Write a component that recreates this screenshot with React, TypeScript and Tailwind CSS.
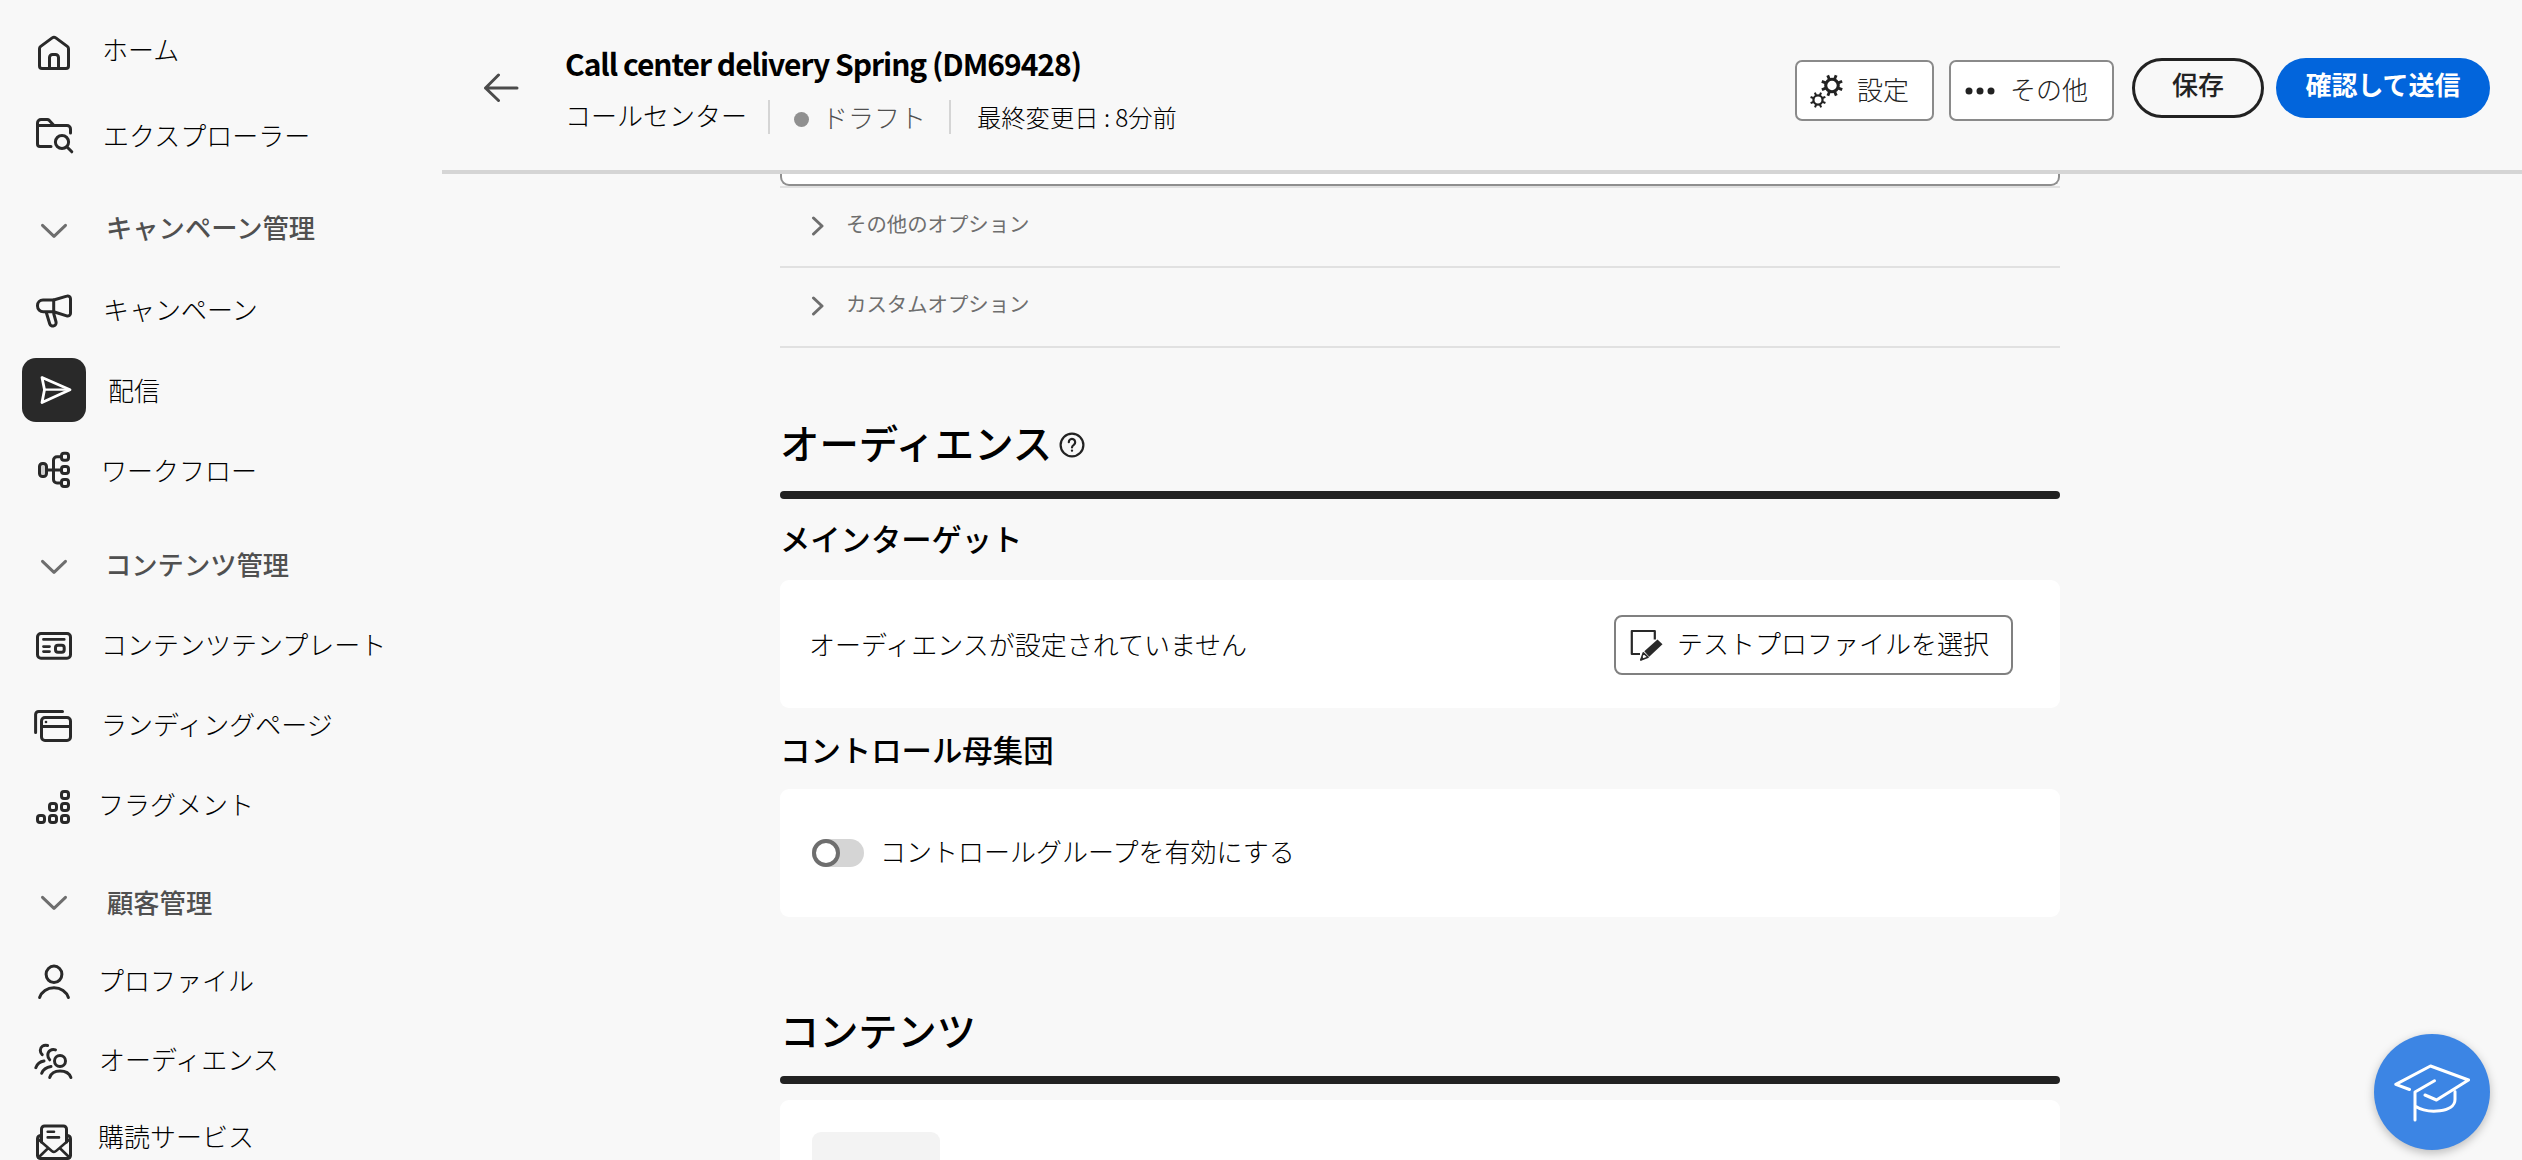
import type { ReactNode } from 'react';

function Glyph({ children, className = 'text-[#292929]' }: { children: ReactNode; className?: string }) {
  return (
    <svg
      viewBox="0 0 40 40"
      className={`size-10 shrink-0 overflow-visible ${className}`}
      fill="none"
      stroke="currentColor"
      strokeWidth="3"
      strokeLinecap="round"
      strokeLinejoin="round"
    >
      {children}
    </svg>
  );
}

const icons: Record<string, ReactNode> = {
  home: (
    <>
      <path d="M5.5 34V16.8a3 3 0 0 1 1.2-2.4L18.2 5.9a3 3 0 0 1 3.6 0l11.5 8.5a3 3 0 0 1 1.2 2.4V34a2.5 2.5 0 0 1-2.5 2.5H8A2.5 2.5 0 0 1 5.5 34Z" />
      <path d="M15.5 36V25.5a3 3 0 0 1 3-3h3a3 3 0 0 1 3 3V36" />
    </>
  ),
  explorer: (
    <>
      <path d="M17 31.5H6A2.5 2.5 0 0 1 3.5 29V8A3.5 3.5 0 0 1 7 4.5h6.2a3 3 0 0 1 2.1.9l4.7 5.1" />
      <path d="M3.5 10.5H33a3.5 3.5 0 0 1 3.5 3.5v4" />
      <circle cx="28" cy="27" r="6.6" />
      <path d="m32.8 31.8 5 5" />
    </>
  ),
  campaign: (
    <>
      <path d="M19.7 9H9a5.5 5.5 0 0 0-5.5 5.5v.5A5.8 5.8 0 0 0 9.3 20.8h10.4Z" />
      <path d="M19.7 9 32.8 5.1A2.8 2.8 0 0 1 36.5 7.8v14.4A2.8 2.8 0 0 1 32.7 24.9L19.7 20.8" />
      <path d="m12.3 21.5 3.4 11.2a3.3 3.3 0 0 0 4.1 2.2 3.3 3.3 0 0 0 2.2-4.1L19.7 22.5" />
    </>
  ),
  delivery: (
    <>
      <path d="M8 7.5 36 19.7 8 32.5l2.5-12.8Z" strokeWidth="2.8" />
      <path d="M10.5 19.7H32" strokeWidth="2.2" />
    </>
  ),
  workflow: (
    <>
      <rect x="5.5" y="13.5" width="7" height="13" rx="3" fill="#d0d0d0" />
      <rect x="27.5" y="3.2" width="7" height="7" rx="2.5" />
      <rect x="27.5" y="16.5" width="7" height="7" rx="2.5" />
      <rect x="27.5" y="29.5" width="7" height="7" rx="2.5" />
      <path d="M14 20h13M27 6.7h-4a3.5 3.5 0 0 0-3.5 3.5v19.3A3.5 3.5 0 0 0 23 33h4" />
    </>
  ),
  template: (
    <>
      <rect x="3.5" y="7.5" width="33" height="24.7" rx="3.5" />
      <path d="M9.5 13.4h20.7M9.5 20.6h6M9.5 25.6h6" strokeWidth="2.8" />
      <rect x="21.5" y="19.2" width="8.7" height="7" rx="2.5" />
    </>
  ),
  landing: (
    <>
      <path d="M1.6 26.5V8.5a3 3 0 0 1 3-3H28.5" />
      <rect x="7.5" y="11.5" width="29" height="23" rx="3.5" />
      <path d="M8 20.4h28" />
      <circle cx="12" cy="16" r="1.3" fill="currentColor" stroke="none" />
    </>
  ),
  fragment: (
    <>
      <rect x="27.5" y="4.5" width="7" height="7" rx="2.5" />
      <rect x="15.5" y="16.5" width="7" height="7" rx="2.5" />
      <rect x="27.5" y="16.5" width="7" height="7" rx="2.5" />
      <rect x="3.5" y="28.5" width="7" height="7" rx="2.5" />
      <rect x="15.5" y="28.5" width="7" height="7" rx="2.5" />
      <rect x="27.5" y="28.5" width="7" height="7" rx="2.5" />
    </>
  ),
  profile: (
    <>
      <ellipse cx="20" cy="12.3" rx="7.9" ry="8.2" />
      <path d="M5.6 35.5C7.5 29.8 13.2 25.8 20 25.8s12.5 4 14.4 9.7" />
    </>
  ),
  audience: (
    <>
      <circle cx="26" cy="19" r="5.5" />
      <path d="M15.7 35.5c1.4-4.2 5.3-6.5 10.3-6.5s9.4 2.3 10.9 6.5" />
      <path d="M21.5 7.9c-4-1.3-7.7 1.1-7.7 5 0 1.9.6 3.6 1.9 4.9" />
      <path d="M7.7 31.3c1.5-3.8 5-6.2 9.3-6.8" />
      <path d="M13.6 3.5c-4-1.1-7.2 1.2-7.3 4.7 0 1.7.5 3.2 1.9 4.5" />
      <path d="M1.8 25.7c1.3-3.5 4.3-6 8.2-6.6" />
    </>
  ),
  subscription: (
    <>
      <path d="M7.5 20V7A3 3 0 0 1 10.5 4h19a3 3 0 0 1 3 3v13" />
      <path d="M7.5 13.6C5 13.6 3.5 15 3.5 17v16.5a3 3 0 0 0 3 3h27a3 3 0 0 0 3-3V17c0-2-1.5-3.4-4-3.4" />
      <path d="m4 17 13.8 11.9a3.3 3.3 0 0 0 4.4 0L36 17M4.5 35.5l9.8-9.5M35.5 35.5 25.7 26" strokeWidth="2.6" />
      <path d="M13.7 9.7H20M13.7 15.4H25" strokeWidth="2.6" />
    </>
  ),
};

type NavItem = { icon?: string; label: string; row: string; text: string; active?: boolean };

const nav: NavItem[] = [
  { icon: 'home', label: 'ホーム', row: 'mt-3', text: 'ml-4 mb-[7px]' },
  { icon: 'explorer', label: 'エクスプローラー', row: 'mt-[3px]', text: 'ml-[17px] mb-px' },
  { label: 'キャンペーン管理', row: 'mt-4', text: 'ml-5 mb-2' },
  { icon: 'campaign', label: 'キャンペーン', row: 'mt-0', text: 'ml-[17px] mb-[5px]' },
  { icon: 'delivery', label: '配信', row: '-mt-px', text: 'ml-[22px]', active: true },
  { icon: 'workflow', label: 'ワークフロー', row: 'mt-0', text: 'ml-[15px]' },
  { label: 'コンテンツ管理', row: 'mt-[17px]', text: 'ml-[19px] mb-1.5' },
  { icon: 'template', label: 'コンテンツテンプレート', row: '-mt-px', text: 'ml-[15px] mb-[5px]' },
  { icon: 'landing', label: 'ランディングページ', row: 'mt-0', text: 'ml-[15px] mb-[5px]' },
  { icon: 'fragment', label: 'フラグメント', row: 'mt-px', text: 'ml-3 mb-1.5' },
  { label: '顧客管理', row: 'mt-4', text: 'ml-[21px] mb-[3px]' },
  { icon: 'profile', label: 'プロファイル', row: '-mt-px', text: 'ml-3 mb-[5px]' },
  { icon: 'audience', label: 'オーディエンス', row: 'mt-0', text: 'ml-[13px] mb-1.5' },
  { icon: 'subscription', label: '購読サービス', row: 'mt-0', text: 'ml-3 mb-3' },
];

function Sidebar() {
  return (
    <nav className="flex h-full w-[442px] shrink-0 flex-col overflow-hidden">
      {nav.map((n) => (
        <div key={n.label} className={`flex h-20 shrink-0 items-center pl-[22px] ${n.row}`}>
          <div className={`flex size-16 shrink-0 items-center justify-center rounded-[14px] ${n.active ? 'bg-[#292929]' : ''}`}>
            {n.icon ? (
              <Glyph className={n.active ? 'text-white' : 'text-[#292929]'}>{icons[n.icon]}</Glyph>
            ) : (
              <Glyph className="text-[#6e6e6e]">
                <path d="M8.5 14.3 20 25.3l11.5-11" />
              </Glyph>
            )}
          </div>
          <span
            className={`leading-8 whitespace-nowrap ${n.icon ? 'text-[26px] font-light text-black' : 'text-[26.3px] font-medium text-[#505050]'} ${n.text}`}
          >
            {n.label}
          </span>
        </div>
      ))}
    </nav>
  );
}

/* Cog outline: eight teeth around a ring */
function Cog({ cx, cy, r }: { cx: number; cy: number; r: number }) {
  return (
    <g stroke="currentColor" fill="none">
      <circle cx={cx} cy={cy} r={r * 0.57} strokeWidth={r * 0.28} />
      {[0, 45, 90, 135, 180, 225, 270, 315].map((a) => (
        <path key={a} d={`M${cx} ${cy - r * 0.62}V${cy - r}`} strokeWidth={r * 0.26} transform={`rotate(${a + 22} ${cx} ${cy})`} />
      ))}
    </g>
  );
}

function Header() {
  return (
    <header className="flex h-[174px] shrink-0 items-start border-b-4 border-[#d5d5d5]">
      <svg viewBox="0 0 36 30" className="mt-[73px] ml-[41px] h-[30px] w-9 shrink-0 text-[#4b4b4b]" fill="none" stroke="currentColor" strokeWidth="3" strokeLinecap="round" strokeLinejoin="round">
        <path d="M34 15H2.5M15.5 2 2.5 15l13 12.5" />
      </svg>
      <div className="mt-[43px] ml-[46px] flex flex-col">
        <h1 className="h-10 text-[30px] leading-10 font-bold tracking-[-1.02px] whitespace-nowrap text-black">Call center delivery Spring (DM69428)</h1>
        <div className="mt-[17px] flex h-[34px] items-center whitespace-nowrap">
          <span className="mb-1 text-[26px] leading-8 font-light text-black">コールセンター</span>
          <span className="ml-[21px] h-[34px] w-0.5 bg-[#d5d5d5]" />
          <span className="mt-1 ml-6 size-[15px] rounded-full bg-[#909090]" />
          <span className="ml-[13px] text-[26px] leading-8 font-light text-[#505050]">ドラフト</span>
          <span className="ml-[23px] h-[34px] w-0.5 bg-[#d5d5d5]" />
          <span className="ml-[26px] text-[24.3px] leading-8 font-light text-black">最終変更日 : 8分前</span>
        </div>
      </div>
      <div className="mt-[58px] mr-8 ml-auto flex items-start whitespace-nowrap text-[#222]">
        <button className="mt-0.5 flex h-[61px] w-[139px] items-center rounded-[7px] border-2 border-[#8a8a8a] bg-white pb-1 pl-3">
          <svg viewBox="0 0 36 36" className="mt-1.5 size-9 shrink-0">
            <Cog cx={23} cy={11.5} r={11} />
            <Cog cx={9} cy={26} r={8} />
          </svg>
          <span className="ml-3 text-[26px] leading-8 font-light">設定</span>
        </button>
        <button className="mt-0.5 ml-[15px] flex h-[61px] w-[165px] items-center rounded-[7px] border-2 border-[#8a8a8a] bg-white pb-1 pl-3.5">
          <svg viewBox="0 0 30 8" className="mt-1 h-2 w-[30px] shrink-0" fill="currentColor">
            <circle cx="4" cy="4" r="3.5" />
            <circle cx="15" cy="4" r="3.5" />
            <circle cx="26" cy="4" r="3.5" />
          </svg>
          <span className="ml-[15px] text-[26px] leading-8 font-light">その他</span>
        </button>
        <button className="ml-[18px] flex h-[60px] w-[132px] items-center justify-center rounded-full border-[3px] border-[#222] pb-2 text-[26px] leading-8 font-medium">
          保存
        </button>
        <button className="ml-3 flex h-[60px] w-[214px] items-center justify-center rounded-full bg-[#0265dc] pb-2 text-[26px] leading-8 font-bold text-white">
          確認して送信
        </button>
      </div>
    </header>
  );
}

function OptionRow({ label }: { label: string }) {
  return (
    <div className="flex h-20 shrink-0 items-center border-b-2 border-[#e1e1e1] pl-[31px]">
      <svg viewBox="0 0 14 20" className="mb-0.5 h-5 w-3.5 shrink-0 text-[#6e6e6e]" fill="none" stroke="currentColor" strokeWidth="3" strokeLinecap="round" strokeLinejoin="round">
        <path d="m2.5 2 8.5 8-8.5 8" />
      </svg>
      <span className="mb-2 ml-[21px] text-[20.4px] leading-7 text-[#6e6e6e]">{label}</span>
    </div>
  );
}

function Content() {
  return (
    <main className="ml-[338px] flex w-[1280px] flex-1 flex-col overflow-hidden whitespace-nowrap text-black">
      <div className="h-3 shrink-0 rounded-b-[9px] border-2 border-t-0 border-[#8f8f8f] bg-white" />
      <div className="h-0.5 shrink-0 bg-[#e1e1e1]" />
      <OptionRow label="その他のオプション" />
      <OptionRow label="カスタムオプション" />

      <div className="mt-16 flex h-[60px] shrink-0 items-center">
        <h2 className="text-[39.4px] leading-[56px] font-medium text-black">オーディエンス</h2>
        <svg viewBox="0 0 26 26" className="mt-1.5 ml-[7px] size-[26px]" fill="none" stroke="#222" strokeWidth="2.2" strokeLinecap="round">
          <circle cx="13" cy="13" r="11.4" />
          <path d="M9.8 10.2a3.2 3.2 0 1 1 5 2.6c-1.2.8-1.8 1.3-1.8 2.6" />
          <circle cx="13" cy="18.6" r="0.6" fill="#222" strokeWidth="1.2" />
        </svg>
      </div>
      <div className="mt-[19px] h-2 shrink-0 rounded-full bg-[#222]" />
      <h3 className="mt-[17px] h-11 shrink-0 text-[30.3px] leading-[44px] font-medium text-black">メインターゲット</h3>
      <section className="mt-5 flex h-32 shrink-0 items-center rounded-[9px] bg-white pl-[29px]">
        <span className="mb-px text-[26px] leading-8 font-light">オーディエンスが設定されていません</span>
        <button className="mt-0.5 mr-[47px] ml-auto flex h-[60px] w-[399px] items-center rounded-[8px] border-2 border-[#808080] bg-white pl-[13px]">
          <svg viewBox="0 0 34 34" className="size-[34px] shrink-0 text-[#292929]" fill="none" stroke="currentColor" strokeWidth="2.2" strokeLinejoin="round">
            <path d="M11 26H2.8V3h23v8.5" />
            <path d="M15.3 23.3 28.5 11.5l5 4.8L20.2 28.7Z" fill="currentColor" stroke="none" />
            <path d="m14.3 24.8-2.5 7.2 7.2-2.8Z" strokeWidth="1.6" />
            <path d="m11.8 32 2.8-1.2-1.7-1.7Z" fill="currentColor" strokeWidth="1" />
          </svg>
          <span className="mb-1 ml-3.5 text-[26px] leading-8 font-light">テストプロファイルを選択</span>
        </button>
      </section>
      <h3 className="mt-[19px] h-11 shrink-0 text-[30.4px] leading-[44px] font-medium text-black">コントロール母集団</h3>
      <section className="mt-[18px] flex h-32 shrink-0 items-center rounded-[9px] bg-white pl-8">
        <span className="flex h-7 w-[52px] items-center rounded-full bg-[#d5d5d5]">
          <span className="size-7 rounded-full border-4 border-[#6e6e6e] bg-white" />
        </span>
        <span className="mb-1 ml-4 text-[26px] leading-8 font-light">コントロールグループを有効にする</span>
      </section>

      <h2 className="mt-[82px] h-[60px] shrink-0 text-[39.2px] leading-[60px] font-medium text-black">コンテンツ</h2>
      <div className="mt-[17px] h-2 shrink-0 rounded-full bg-[#222]" />
      <section className="mt-4 h-32 shrink-0 rounded-[9px] bg-white pt-8 pl-8">
        <div className="h-24 w-32 rounded-[9px] bg-[#f3f3f3]" />
      </section>
    </main>
  );
}

export default function App() {
  return (
    <div className="relative flex h-[1160px] w-[2522px] overflow-hidden bg-[#f8f8f8] font-['Noto_Sans_CJK_JP','Noto_Sans',sans-serif]">
      <Sidebar />
      <div className="flex min-w-0 flex-1 flex-col">
        <Header />
        <Content />
      </div>
      <button className="absolute right-8 bottom-2.5 flex size-[116px] items-center justify-center rounded-full bg-[#3c85e4] shadow-[0_3px_10px_rgba(0,0,0,0.25)]">
        <svg viewBox="0 0 76 60" className="h-[60px] w-[76px]" fill="none" stroke="#fff" strokeWidth="3" strokeLinecap="round" strokeLinejoin="round">
          <path d="M15.5 27.5 1.8 22.3 36.5 4l38 14-32 20-11.5-5" />
          <path d="M40.5 18.8 21 30v28M21 44c13 8.5 40 6.5 40-6.5v-8" />
        </svg>
      </button>
    </div>
  );
}
